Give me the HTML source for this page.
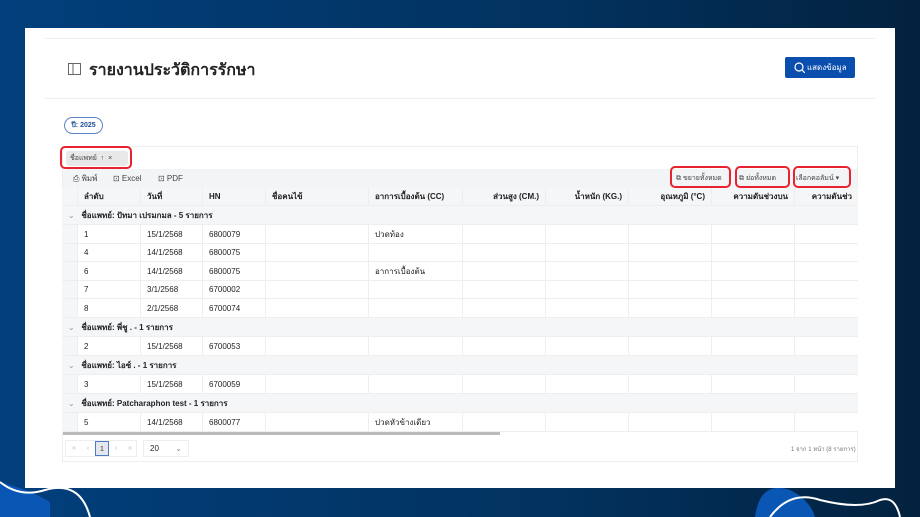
<!DOCTYPE html><html><head><meta charset="utf-8"><style>
*{box-sizing:border-box;margin:0;padding:0}
body{width:920px;height:517px;overflow:hidden;position:relative;font-family:"Liberation Sans","Noto Sans CJK SC",sans-serif;background:linear-gradient(90deg,#023f7c,#02325f 60%,#03223f);color:#222}
.panel{position:absolute;left:25px;top:28px;width:870px;height:460px;background:#fff}
.abs{position:absolute}
.hl{position:absolute;height:1px;background:#eee}
.red{position:absolute;border:2px solid #e8232f;border-radius:5px}
.cell{position:absolute;font-size:8px;padding-left:6px;white-space:nowrap;overflow:hidden;display:flex;align-items:center}
.pg{position:absolute;top:0;width:14px;height:15px;text-align:center;font-size:7px;line-height:15px;color:#bbb}
</style></head><body>
<svg class="abs" style="left:0;top:470px" width="920" height="47"><path d="M0 12 Q30 20 50 32 L50 47 L0 47Z" fill="#0a56b5"/><path d="M0 12 Q20 28 45 20 Q80 10 90 47" stroke="#fff" stroke-width="2" fill="none"/><path d="M755 47 Q760 10 790 20 Q810 30 815 47Z" fill="#0a56b5"/><path d="M770 47 Q790 20 820 30 Q860 40 880 30 Q895 25 900 47" stroke="#fff" stroke-width="2" fill="none"/></svg>
<div class="panel">
<div class="hl" style="left:20px;top:10px;width:830px"></div>
<div class="hl" style="left:20px;top:70px;width:830px"></div>
<svg class="abs" style="left:43px;top:35px" width="13" height="12"><rect x="0.5" y="0.5" width="12" height="11" fill="none" stroke="#666"/><line x1="5" y1="0" x2="5" y2="12" stroke="#666"/></svg>
<div class="abs" style="left:64px;top:30px;font-size:16px;font-weight:bold;color:#222">รายงานประวัติการรักษา</div>
<div class="abs" style="left:760px;top:29px;width:70px;height:21px;background:#0a4fae;border-radius:2px;color:#fff;font-size:8px;line-height:21px;padding-left:22px">แสดงข้อมูล<svg class="abs" style="left:9px;top:5px" width="11" height="11"><circle cx="5" cy="5" r="4" fill="none" stroke="#fff" stroke-width="1.2"/><line x1="8" y1="8" x2="11" y2="11" stroke="#fff" stroke-width="1.2"/></svg></div>
<div class="abs" style="left:39px;top:89px;width:39px;height:17px;border:1px solid #5b85c9;border-radius:9px;font-size:7px;line-height:15px;text-align:center;color:#1f4f99;font-weight:bold">ปี: 2025</div>
<div class="abs" style="left:37px;top:118px;width:796px;height:316px;border:1px solid #eee">
 <div class="abs" style="left:3px;top:4px;width:62px;height:15px;background:#e8e8e8;border-radius:3px;font-size:7px;line-height:15px;padding-left:4px;color:#444">ชื่อแพทย์ &nbsp;↑ &nbsp;×</div>
 <div class="abs" style="left:0;top:22px;width:794px;height:20px;background:#f3f4f6;font-size:8px;color:#444;line-height:20px"><span class="abs" style="left:10px">⎙ พิมพ์</span><span class="abs" style="left:50px">⊡ Excel</span><span class="abs" style="left:95px">⊡ PDF</span>
 <span class="abs" style="left:613px;font-size:7px">⧉ ขยายทั้งหมด</span><span class="abs" style="left:676px;font-size:7px">⧉ ย่อทั้งหมด</span><span class="abs" style="left:733px;font-size:7px">เลือกคอลัมน์ ▾</span></div>
</div>
<div class="red" style="left:35px;top:118px;width:72px;height:23px"></div>
<div class="red" style="left:645px;top:138px;width:61px;height:22px"></div>
<div class="red" style="left:710px;top:138px;width:55px;height:22px"></div>
<div class="red" style="left:768px;top:138px;width:58px;height:22px"></div>
<div id="t" class="abs" style="left:37px;top:160px;width:796px;height:244px;overflow:hidden"></div>
<div class="abs" style="left:38px;top:404px;width:437px;height:3px;background:#bbb"></div>
<div class="abs" style="left:40px;top:412px;width:72px;height:17px;border:1px solid #eee">
<div class="pg" style="left:1px">«</div><div class="pg" style="left:15px">‹</div><div class="pg" style="left:29px;border:1px solid #4d79c7;background:#e4e7ee;color:#333">1</div><div class="pg" style="left:43px">›</div><div class="pg" style="left:57px">»</div></div>
<div class="abs" style="left:118px;top:412px;width:46px;height:17px;border:1px solid #eee;font-size:8px;line-height:15px;padding-left:6px">20 <span style="position:absolute;right:6px;color:#888">⌄</span></div>
<div class="abs" style="left:766px;top:416px;font-size:6px;color:#777">1 จาก 1 หน้า (8 รายการ)</div>
</div>
<script>
var t=document.getElementById('t'),h='';
var cols=[15,63,62,63,103,94,83,83,83,83,64],names=['','ลำดับ','วันที่','HN','ชื่อคนไข้','อาการเบื้องต้น (CC)','ส่วนสูง (CM.)','น้ำหนัก (KG.)','อุณหภูมิ (°C)','ความดันช่วงบน','ความดันช่ว'];
function row(y,hh,vals,head){var x=0;for(var i=0;i<cols.length;i++){var r=i>=6&&head;h+='<div class="cell" style="left:'+x+'px;top:'+y+'px;width:'+cols[i]+'px;height:'+hh+'px;'+(i>0?'border-left:1px solid #eee;':'')+'border-bottom:1px solid #eee;'+(head?'font-weight:bold;background:#f5f6f8;':'background:'+(i==0?'#f5f6f8':'#fff')+';')+(r?'justify-content:flex-end;padding-right:6px;':'')+'">'+(vals[i]||'')+'</div>';x+=cols[i];}}
function grp(y,txt){h+='<div class="cell" style="left:0;top:'+y+'px;width:796px;height:19px;background:#f5f6f8;border-bottom:1px solid #eee;font-weight:bold;padding-left:6px"><span style="color:#999;font-weight:normal">⌄</span>&nbsp;&nbsp;&nbsp;'+txt+'</div>';}
row(0,18,names,1);
grp(18,'ชื่อแพทย์: ปัทมา เปรมกมล - 5 รายการ');
var d=[['1','15/1/2568','6800079','ปวดท้อง'],['4','14/1/2568','6800075',''],['6','14/1/2568','6800075','อาการเบื้องต้น'],['7','3/1/2568','6700002',''],['8','2/1/2568','6700074','']];
var ys=[37,56,74,93,111];d.forEach(function(r,k){row(ys[k],(k<4?ys[k+1]-ys[k]:19),['',r[0],r[1],r[2],'',r[3]]);});
grp(130,'ชื่อแพทย์: พี่ชู . - 1 รายการ');row(149,19,['','2','15/1/2568','6700053']);
grp(168,'ชื่อแพทย์: ไอซ์ . - 1 รายการ');row(187,19,['','3','15/1/2568','6700059']);
grp(206,'ชื่อแพทย์: Patcharaphon test - 1 รายการ');row(225,19,['','5','14/1/2568','6800077','','ปวดหัวข้างเดียว']);
t.innerHTML=h;
</script>
</body></html>
